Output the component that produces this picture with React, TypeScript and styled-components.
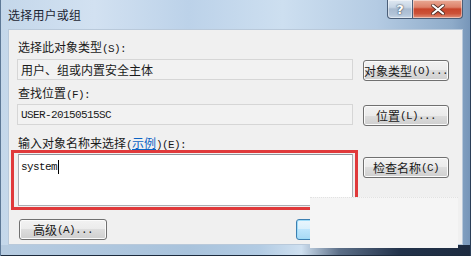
import React from "react";
import styled, { createGlobalStyle } from "styled-components";

const Global = createGlobalStyle`
  html, body { margin: 0; padding: 0; width: 471px; height: 256px; overflow: hidden; background: #2b4a6e; }
  * { box-sizing: border-box; }
`;

const CJK = `"Noto Sans CJK SC", "Noto Sans", sans-serif`;
const MONO = `"Liberation Mono", "Noto Sans CJK SC", monospace`;

const Window = styled.div`
  position: relative;
  width: 471px;
  height: 256px;
  display: flex;
  flex-direction: column;
  padding: 0 8px 11px 8px;
  background:
    linear-gradient(90deg, #b6cbe0 0%, #a9c3dc 40%, #b2cbe3 55%, #cfe0f0 64%, #5c6f88 72%, #22324a 85%, #1d2b40 100%) bottom / 100% 11px no-repeat,
    linear-gradient(90deg, #c4d7ea 0%, #d2e1f1 20%, #bcd2e9 40%, #cddff0 60%, #b4cbe3 80%, #8eabc9 96%, #7695b8 100%);
  box-shadow: inset 1px 0 0 #5d7896, inset -1px 0 0 #2b3f58, inset 0 -1px 0 #1c2a3c;
  font-family: ${CJK};
`;

const TitleBar = styled.div`
  height: 29px;
  display: flex;
  align-items: flex-start;
  justify-content: space-between;
`;

const Title = styled.div`
  margin-top: 7px;
  font-size: 12px;
  line-height: 16px;
  color: #1b2533;
  letter-spacing: 0.2px;
`;

const CaptionButtons = styled.div`
  display: flex;
`;

const CaptionButton = styled.div<{ $kind: "help" | "close" }>`
  height: 19px;
  width: ${(p) => (p.$kind === "close" ? "50px" : "26px")};
  display: flex;
  align-items: center;
  justify-content: center;
  border: 1px solid #4a5e78;
  border-top: none;
  border-left: ${(p) => (p.$kind === "close" ? "none" : "1px solid #4a5e78")};
  border-radius: ${(p) => (p.$kind === "close" ? "0 0 4px 0" : "0 0 0 4px")};
  box-shadow: inset 0 0 0 1px rgba(255, 255, 255, 0.45);
  background: ${(p) =>
    p.$kind === "close"
      ? "linear-gradient(180deg, #e9a995 0%, #dd8169 40%, #c8452b 50%, #cc5238 75%, #e0917a 100%)"
      : "linear-gradient(180deg, #dfe8f2 0%, #c7d5e4 40%, #a9bbd0 50%, #b2c4d8 80%, #c7d6e6 100%)"};
  color: #fff;
  font-family: "DejaVu Sans", sans-serif;
  font-weight: bold;
  font-size: 13px;
  text-shadow: 0 0 2px #3b4a5c, 0 0 1px #3b4a5c;
`;

const Client = styled.div`
  flex: 1;
  background: #f0f0f0;
  border: 1px solid #b9c9da;
  padding: 10px 13px 0 8px;
  display: grid;
  grid-template-columns: 336px 86px;
  column-gap: 10px;
  align-content: start;
  align-items: start;
`;

const Label = styled.div<{ $top: number }>`
  grid-column: 1 / -1;
  margin-top: ${(p) => p.$top}px;
  margin-left: 1px;
  height: 14px;
  font-size: 12px;
  line-height: 14px;
  color: #1a1a1a;
  white-space: nowrap;
`;

const Half = styled.span`
  font-family: ${MONO};
  font-size: 11px;
  letter-spacing: -0.6px;
`;

const Link = styled.span`
  color: #0b63c4;
  text-decoration: underline;
`;

const Field = styled.div<{ $top: number; $mono?: boolean }>`
  margin-top: ${(p) => p.$top}px;
  height: 21px;
  border: 1px solid #d6d6d6;
  background: #f2f2f2;
  padding: 0 3px;
  display: flex;
  align-items: center;
  font-family: ${(p) => (p.$mono ? MONO : CJK)};
  font-size: ${(p) => (p.$mono ? "11px" : "12px")};
  letter-spacing: ${(p) => (p.$mono ? "-0.6px" : "0")};
  color: #1a1a1a;
  white-space: nowrap;
`;

const Button = styled.div<{ $top?: number; $w?: number; $focused?: boolean }>`
  margin-top: ${(p) => p.$top ?? 0}px;
  width: ${(p) => (p.$w ? `${p.$w}px` : "auto")};
  height: 21px;
  border: 1px solid ${(p) => (p.$focused ? "#3c7fb1" : "#707070")};
  border-radius: 3px;
  background: ${(p) =>
    p.$focused
      ? "linear-gradient(180deg, #eaf6fd 0%, #d9f0fc 50%, #bee6fd 50%, #a7d9f5 100%)"
      : "linear-gradient(180deg, #f2f2f2 0%, #ebebeb 50%, #dddddd 50%, #cfcfcf 100%)"};
  box-shadow: inset 0 0 0 1px ${(p) => (p.$focused ? "#9fdcf8" : "#fbfbfb")};
  display: flex;
  align-items: center;
  justify-content: center;
  font-size: 12px;
  line-height: 14px;
  color: #1a1a1a;
  white-space: nowrap;
`;

const InputCell = styled.div`
  position: relative;
  margin-top: 4px;
  margin-left: 1px;
  width: 335px;
`;

const TextBox = styled.div`
  height: 52px;
  border: 1px solid #abadb3;
  border-top-color: #8e9299;
  background: #ffffff;
  padding: 5px 2px;
  font-family: ${MONO};
  font-size: 11px;
  letter-spacing: -0.6px;
  line-height: 14px;
  color: #111;
  display: flex;
  align-items: flex-start;
`;

const Caret = styled.span`
  display: inline-block;
  width: 1px;
  height: 14px;
  margin-left: 1px;
  background: #000;
`;

const RedMark = styled.div`
  position: absolute;
  left: -7px;
  right: -5px;
  top: -4px;
  bottom: -4px;
  border: 3px solid #e0393b;
  pointer-events: none;
`;

const BottomRow = styled.div`
  grid-column: 1 / -1;
  margin-top: 13px;
  display: flex;
  justify-content: space-between;
  padding-left: 2px;
`;

const RightGroup = styled.div`
  display: flex;
  gap: 3px;
`;

const Blur = styled.div`
  position: absolute;
  left: 310px;
  top: 197px;
  width: 148px;
  height: 51px;
  background: #f5f5f5;
  border-top: 1px dotted #e2e2e2;
`;

export default function App() {
  return (
    <>
      <Global />
      <Window>
        <TitleBar>
          <Title>选择用户或组</Title>
          <CaptionButtons>
            <CaptionButton $kind="help">?</CaptionButton>
            <CaptionButton $kind="close">
              <svg width="14" height="11" viewBox="0 0 14 11">
                <path d="M2 1.5 L12 9.5 M12 1.5 L2 9.5" stroke="#4a2a22" strokeWidth="3.6" strokeLinecap="round" />
                <path d="M2 1.5 L12 9.5 M12 1.5 L2 9.5" stroke="#ffffff" strokeWidth="2.2" strokeLinecap="round" />
              </svg>
            </CaptionButton>
          </CaptionButtons>
        </TitleBar>
        <Client>
          <Label $top={0}>
            选择此对象类型<Half>(S):</Half>
          </Label>
          <Field $top={5}>用户、组或内置安全主体</Field>
          <Button $top={6}>
            对象类型<Half>(O)...</Half>
          </Button>

          <Label $top={5}>
            查找位置<Half>(F):</Half>
          </Label>
          <Field $top={4} $mono>
            USER-20150515SC
          </Field>
          <Button $top={5}>
            位置<Half>(L)...</Half>
          </Button>

          <Label $top={10}>
            输入对象名称来选择<Half>(</Half>
            <Link>示例</Link>
            <Half>)(E):</Half>
          </Label>
          <InputCell>
            <TextBox role="textbox">
              system
              <Caret />
            </TextBox>
            <RedMark />
          </InputCell>
          <Button $top={7}>
            检查名称<Half>(C)</Half>
          </Button>

          <BottomRow>
            <Button $w={88}>
              高级<Half>(A)...</Half>
            </Button>
            <RightGroup>
              <Button $w={75} $focused>
                确定
              </Button>
              <Button $w={75}>取消</Button>
            </RightGroup>
          </BottomRow>
        </Client>
        <Blur />
      </Window>
    </>
  );
}
